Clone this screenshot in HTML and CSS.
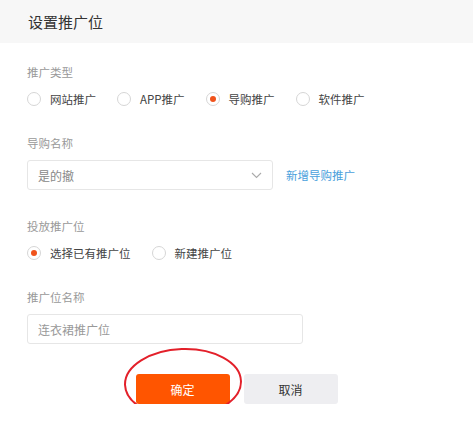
FILE: index.html
```html
<!DOCTYPE html>
<html lang="zh-CN">
<head>
  <meta charset="UTF-8" />
  <title>设置推广位</title>
  <link rel="stylesheet" href="styles.css">
</head>
<body>
  <header class="topo">
    <h1>设置推广位</h1>
  </header>

  <main class="form">
    <div class="grupo">
      <div class="rotulo rotulo-radio">推广类型</div>
      <div class="radios">
        <label class="radio"><span class="bola"></span>网站推广</label>
        <label class="radio"><span class="bola"></span>APP推广</label>
        <label class="radio"><span class="bola marcada"></span>导购推广</label>
        <label class="radio"><span class="bola"></span>软件推广</label>
      </div>
    </div>

    <div class="grupo">
      <div class="rotulo">导购名称</div>
      <div class="linha">
        <div class="select">
          <span>是的撤</span>
          <svg class="seta" width="11" height="7" viewBox="0 0 11 7">
            <path d="M1 1 L5.5 5.5 L10 1" fill="none" stroke="#aaa" stroke-width="1.1"/>
          </svg>
        </div>
        <a class="link" href="#">新增导购推广</a>
      </div>
    </div>

    <div class="grupo">
      <div class="rotulo rotulo-radio">投放推广位</div>
      <div class="radios">
        <label class="radio"><span class="bola marcada"></span>选择已有推广位</label>
        <label class="radio"><span class="bola"></span>新建推广位</label>
      </div>
    </div>

    <div class="grupo">
      <div class="rotulo">推广位名称</div>
      <input class="campo" type="text" placeholder="连衣裙推广位">
    </div>

    <div class="botoes">
      <div class="destaque">
        <button class="btn btn-ok">确定</button>
        <svg class="circulo" width="120" height="72" viewBox="0 0 120 72">
          <ellipse cx="60" cy="36" rx="58" ry="34" fill="none" stroke="#e3202a" stroke-width="2" transform="rotate(-2 60 36)"/>
        </svg>
      </div>
      <button class="btn btn-cancelar">取消</button>
    </div>
  </main>
</body>
</html>
```

FILE: styles.css
```css
* { box-sizing: border-box; }
body {
  margin: 0;
  background: #fff;
  color: #333;
  font-family: "Noto Sans CJK SC", "Noto Sans", sans-serif;
  font-size: 12px;
}
.topo {
  background: #f7f7f7;
  height: 43px;
  padding-left: 28px;
}
.topo h1 {
  margin: 0;
  font-size: 15px;
  font-weight: normal;
  line-height: 43px;
  color: #333;
}
.form {
  padding: 21px 27px 0;
}
.grupo {
  margin-bottom: 28px;
}
.rotulo {
  line-height: 16px;
  font-size: 11.5px;
  color: #999;
  margin-bottom: 9px;
}
.rotulo-radio {
  margin-bottom: 11px;
}
.radios {
  display: flex;
  gap: 21px;
  height: 16px;
}
.radio {
  display: flex;
  align-items: center;
  gap: 9px;
  line-height: 16px;
  font-size: 11.5px;
  color: #444;
}
.bola {
  width: 14px;
  height: 14px;
  border: 1px solid #d6d6d6;
  border-radius: 50%;
  display: flex;
  align-items: center;
  justify-content: center;
}
.bola.marcada::after {
  content: "";
  width: 6px;
  height: 6px;
  border-radius: 50%;
  background: #f0531c;
}
.linha {
  display: flex;
  align-items: center;
  gap: 13px;
}
.select {
  width: 246px;
  height: 30px;
  border: 1px solid #e6e6e6;
  border-radius: 3px;
  padding: 0 10px;
  display: flex;
  align-items: center;
  justify-content: space-between;
  color: #888;
}
.link {
  color: #4a9fdc;
  font-size: 11.5px;
  text-decoration: none;
}
.campo {
  display: block;
  width: 276px;
  height: 30px;
  border: 1px solid #e6e6e6;
  border-radius: 3px;
  padding: 0 10px;
  font-family: inherit;
  font-size: 12px;
  color: #333;
  outline: none;
}
.campo::placeholder {
  color: #999;
}
.botoes {
  display: flex;
  justify-content: center;
  gap: 14px;
  padding-top: 2px;
  margin-left: -27px;
  margin-right: -27px;
}
.destaque {
  position: relative;
}
.btn {
  width: 94px;
  height: 30px;
  border: none;
  border-radius: 3px;
  font-family: inherit;
  font-size: 12px;
  cursor: pointer;
}
.btn-ok {
  background: #ff5500;
  color: #fff;
}
.btn-cancelar {
  background: #eeeef1;
  color: #333;
}
.circulo {
  position: absolute;
  left: -13px;
  top: -27px;
  pointer-events: none;
}
```
